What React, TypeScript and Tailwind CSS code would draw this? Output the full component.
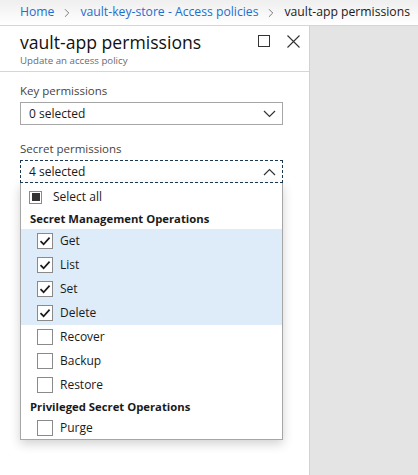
import { ChevronRight } from 'lucide-react';

const font = { fontFamily: '"Open Sans", "Noto Sans", sans-serif' };

function Check({ checked }: { checked: boolean }) {
  return (
    <div className="w-4 h-4 border border-[#8a8a8a] bg-white flex items-center justify-center shrink-0">
      {checked && (
        <svg width="12" height="12" viewBox="0 0 12 12">
          <path d="M1.5 6.2 L4.6 9.2 L10.6 2.6" fill="none" stroke="#1a1a1a" strokeWidth="1.7" />
        </svg>
      )}
    </div>
  );
}

function Chevron({ up }: { up?: boolean }) {
  return (
    <svg width="13" height="8" viewBox="0 0 13 8">
      <path d={up ? 'M1 7 L6.5 1.5 L12 7' : 'M1 1 L6.5 6.5 L12 1'} fill="none" stroke="#333" strokeWidth="1.2" />
    </svg>
  );
}

const items = [
  { name: 'Get', checked: true },
  { name: 'List', checked: true },
  { name: 'Set', checked: true },
  { name: 'Delete', checked: true },
  { name: 'Recover', checked: false },
  { name: 'Backup', checked: false },
  { name: 'Restore', checked: false },
];

export default function App() {
  return (
    <div className="w-[418px] h-[475px] overflow-hidden flex flex-col bg-[#e4e4e4]" style={font}>
      {/* Breadcrumb */}
      <div className="h-[26px] shrink-0 flex items-center pl-5 gap-[6px] text-[12.2px] bg-gradient-to-b from-[#efefef] to-white border-b border-[#d6d6d6] whitespace-nowrap">
        <span className="text-[#1c6fd0]">Home</span>
        <ChevronRight className="w-[14px] h-[14px] text-[#555]" strokeWidth={1.3} />
        <span className="text-[#1c6fd0]">vault-key-store - Access policies</span>
        <ChevronRight className="w-[14px] h-[14px] text-[#555]" strokeWidth={1.3} />
        <span className="text-[#1a1a1a]">vault-app permissions</span>
      </div>

      <div className="flex flex-1 min-h-0">
        {/* Blade */}
        <div className="w-[310px] shrink-0 bg-white border-r border-[#d2d2d2] flex flex-col">
          <div className="pl-5 pr-[9px] pt-[4px] pb-[3px] border-b border-[#d6d6d6] flex">
            <div className="flex-1">
              <div className="text-[17.6px] leading-[24px] text-[#111]">vault-app permissions</div>
              <div className="text-[9.7px] leading-[14px] text-[#6b6b6b]">Update an access policy</div>
            </div>
            <div className="flex gap-[17px] pt-[5px]">
              <div className="w-[12px] h-[12px] border border-[#333]" />
              <svg width="13" height="13" viewBox="0 0 13 13">
                <path d="M0.5 0.5 L12.5 12.5 M12.5 0.5 L0.5 12.5" stroke="#333" strokeWidth="1.1" />
              </svg>
            </div>
          </div>

          <div className="pl-5 pr-[26px] pt-[11px]">
            <div className="text-[11.5px] leading-[16px] text-[#444]">Key permissions</div>
            <div className="mt-[3px] h-[23px] border border-[#a6a6a6] flex items-center justify-between pl-2 pr-[6px] text-[12px] text-[#1a1a1a]">
              <span>0 selected</span>
              <Chevron />
            </div>

            <div className="mt-[16px] text-[11.5px] leading-[16px] text-[#444]">Secret permissions</div>
            <div className="mt-[3px] h-[23px] border border-dashed border-[#1684c8] outline outline-1 outline-dashed outline-[#1b3a52] outline-offset-[-1px] flex items-center justify-between pl-2 pr-[6px] text-[12px] text-[#1a1a1a]">
              <span>4 selected</span>
              <Chevron up />
            </div>

            {/* Dropdown list */}
            <div className="border-x border-b border-[#a6a6a6] bg-white shadow-[0_4px_10px_rgba(0,0,0,0.18)] pt-[2px] text-[12px] text-[#1a1a1a]">
              <div className="h-[24px] flex items-center pl-[8px] gap-[11px]">
                <div className="w-[13px] h-[13px] border border-[#8a8a8a] flex items-center justify-center">
                  <div className="w-[8px] h-[8px] bg-[#333]" />
                </div>
                <span>Select all</span>
              </div>
              <div className="h-[20px] flex items-center pl-[9px] font-bold text-[11.3px]">Secret Management Operations</div>
              {items.map((it) => (
                <div
                  key={it.name}
                  className={`h-[24px] flex items-center pl-[16px] gap-[7px] ${it.checked ? 'bg-[#deecf9]' : ''}`}
                >
                  <Check checked={it.checked} />
                  <span>{it.name}</span>
                </div>
              ))}
              <div className="h-[20px] flex items-center pl-[9px] font-bold text-[11.3px]">Privileged Secret Operations</div>
              <div className="h-[22px] flex items-center pl-[16px] gap-[7px]">
                <Check checked={false} />
                <span>Purge</span>
              </div>
            </div>
          </div>
        </div>
        <div className="flex-1" />
      </div>
    </div>
  );
}
